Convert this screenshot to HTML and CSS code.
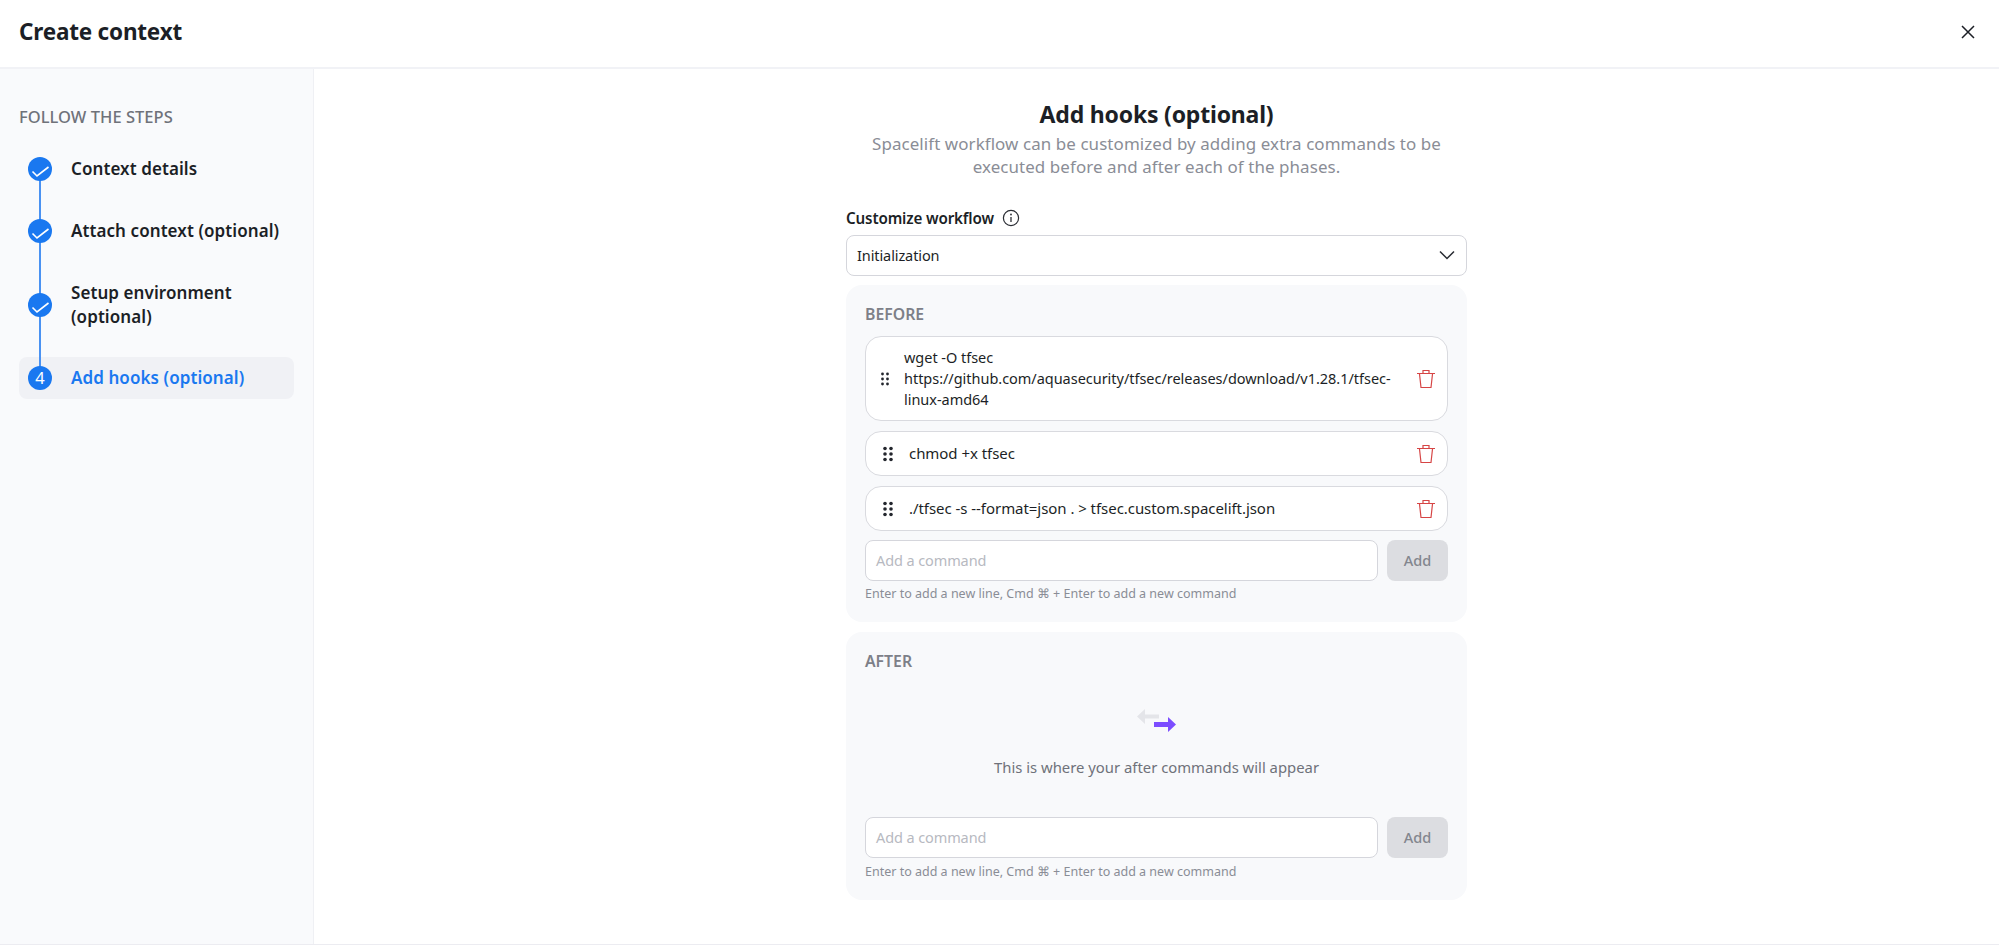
FILE: index.html
```html
<!DOCTYPE html>
<html lang="en">
<head>
<meta charset="utf-8">
<title>Create context</title>
<link rel="stylesheet" href="styles.css">
</head>
<body>
<div class="app">
  <header class="topbar">
    <h1 class="page-title">Create context</h1>
    <button class="close" aria-label="Close">
      <svg width="14" height="14" viewBox="0 0 14 14"><path d="M1 1l12 12M13 1L1 13" stroke="#1c1f26" stroke-width="1.5" fill="none"/></svg>
    </button>
  </header>
  <div class="body">
    <aside class="sidebar">
      <div class="steps-title">FOLLOW THE STEPS</div>
      <ol class="steps">
        <li class="step step-1">
          <span class="dot"><svg width="24" height="24" viewBox="0 0 24 24"><path d="M4.500 14.500l4.500 4.500 11.500-9" stroke="#fff" stroke-width="1.600" fill="none"/></svg></span>
          <span class="step-label">Context details</span>
        </li>
        <li class="step step-2">
          <span class="dot"><svg width="24" height="24" viewBox="0 0 24 24"><path d="M4.500 14.500l4.500 4.500 11.500-9" stroke="#fff" stroke-width="1.600" fill="none"/></svg></span>
          <span class="step-label">Attach context (optional)</span>
        </li>
        <li class="step step-3">
          <span class="dot"><svg width="24" height="24" viewBox="0 0 24 24"><path d="M4.500 14.500l4.500 4.500 11.500-9" stroke="#fff" stroke-width="1.600" fill="none"/></svg></span>
          <span class="step-label">Setup environment<br>(optional)</span>
        </li>
        <li class="step step-4 active">
          <span class="dot dot-num">4</span>
          <span class="step-label">Add hooks (optional)</span>
        </li>
      </ol>
    </aside>
    <main class="main">
      <div class="content">
        <h2 class="heading">Add hooks (optional)</h2>
        <p class="sub">Spacelift workflow can be customized by adding extra commands to be<br>executed before and after each of the phases.</p>
        <div class="field-label">Customize workflow
          <svg width="18" height="18" viewBox="0 0 18 18"><circle cx="9" cy="9" r="7.6" fill="none" stroke="#2a2d34" stroke-width="1.2"/><path d="M9 8v5" stroke="#2a2d34" stroke-width="1.3"/><circle cx="9" cy="5.5" r="0.9" fill="#2a2d34"/></svg>
        </div>
        <div class="select">
          <span>Initialization</span>
          <svg width="16" height="10" viewBox="0 0 16 10"><path d="M1 1.5l7 7 7-7" stroke="#2a2d34" stroke-width="1.5" fill="none"/></svg>
        </div>
        <section class="panel panel-before">
          <div class="panel-title">BEFORE</div>
          <div class="cmd cmd-tall">
            <svg class="grip-sm" width="8" height="14" viewBox="0 0 8 14"><g fill="#23262d"><circle cx="1.5" cy="2" r="1.4"/><circle cx="6.5" cy="2" r="1.4"/><circle cx="1.5" cy="7" r="1.4"/><circle cx="6.5" cy="7" r="1.4"/><circle cx="1.5" cy="12" r="1.4"/><circle cx="6.5" cy="12" r="1.4"/></g></svg>
            <div class="cmd-text">wget -O tfsec<br>https://github.com/aquasecurity/tfsec/releases/download/v1.28.1/tfsec-<br>linux-amd64</div>
            <svg class="trash" width="20" height="20" viewBox="0 0 20 20"><path d="M1 4.500h18M7 4.300V1.500h6v2.800M3.500 5l1.500 13.500h10L16.500 5" fill="none" stroke="#d64545" stroke-width="1.200"/></svg>
          </div>
          <div class="cmd">
            <svg class="grip" width="10" height="16" viewBox="0 0 10 16"><g fill="#23262d"><circle cx="2" cy="2.500" r="1.800"/><circle cx="8" cy="2.500" r="1.800"/><circle cx="2" cy="8" r="1.800"/><circle cx="8" cy="8" r="1.800"/><circle cx="2" cy="13.500" r="1.800"/><circle cx="8" cy="13.500" r="1.800"/></g></svg>
            <div class="cmd-text">chmod +x tfsec</div>
            <svg class="trash" width="20" height="20" viewBox="0 0 20 20"><path d="M1 4.500h18M7 4.300V1.500h6v2.800M3.500 5l1.500 13.500h10L16.500 5" fill="none" stroke="#d64545" stroke-width="1.200"/></svg>
          </div>
          <div class="cmd">
            <svg class="grip" width="10" height="16" viewBox="0 0 10 16"><g fill="#23262d"><circle cx="2" cy="2.500" r="1.800"/><circle cx="8" cy="2.500" r="1.800"/><circle cx="2" cy="8" r="1.800"/><circle cx="8" cy="8" r="1.800"/><circle cx="2" cy="13.500" r="1.800"/><circle cx="8" cy="13.500" r="1.800"/></g></svg>
            <div class="cmd-text">./tfsec -s --format=json . &gt; tfsec.custom.spacelift.json</div>
            <svg class="trash" width="20" height="20" viewBox="0 0 20 20"><path d="M1 4.500h18M7 4.300V1.500h6v2.800M3.500 5l1.500 13.500h10L16.500 5" fill="none" stroke="#d64545" stroke-width="1.200"/></svg>
          </div>
          <div class="add-row">
            <div class="input">Add a command</div>
            <div class="add-btn">Add</div>
          </div>
          <div class="hint">Enter to add a new line, Cmd ⌘ + Enter to add a new command</div>
        </section>
        <section class="panel panel-after">
          <div class="panel-title">AFTER</div>
          <div class="empty">
            <svg width="40" height="24" viewBox="0 0 40 24">
              <path d="M0 7.500L8 0v5.500h14v4H8V15z" fill="#e4e5e9"/>
              <path d="M39 15.500L31 8v5H17v5h14v5z" fill="#7c4dff"/>
            </svg>
            <div class="empty-text">This is where your after commands will appear</div>
          </div>
          <div class="add-row">
            <div class="input">Add a command</div>
            <div class="add-btn">Add</div>
          </div>
          <div class="hint">Enter to add a new line, Cmd ⌘ + Enter to add a new command</div>
        </section>
      </div>
    </main>
  </div>
</div>
</body>
</html>
```
FILE: styles.css
```css
* { box-sizing: border-box; }
html, body { margin: 0; padding: 0; height: 100%; }
body { font-family: "Noto Sans", "Open Sans", sans-serif; color: #1c1f26; background: #fff; overflow: hidden; }
.app { height: 945px; display: flex; flex-direction: column; border-bottom: 1px solid #ececf1; }
.topbar { height: 69px; flex: none; display: flex; align-items: center; justify-content: space-between; padding: 0 19px; border-bottom: 2px solid #f1f2f6; }
.page-title { margin: 0; font-size: 22.5px; font-weight: 700; letter-spacing: -0.2px; position: relative; top: -2px; }
.close { background: none; border: 0; padding: 0; display: flex; margin-right: 5px; position: relative; top: -2px; }
.body { flex: 1; display: flex; min-height: 0; }
.sidebar { width: 314px; flex: none; background: #f9fafc; border-right: 1px solid #eff0f4; padding: 38px 19px 0; }
.steps-title { font-size: 16.5px; line-height: 20px; font-weight: 500; color: #6f727a; letter-spacing: 0.03px; }
.steps { list-style: none; margin: 0; padding: 0; }
.step { position: relative; display: flex; align-items: center; padding-left: 52px; font-size: 17px; font-weight: 600; line-height: 24px; letter-spacing: 0.08px; }
.step-1 { margin-top: 30px; height: 24px; }
.step-2 { margin-top: 38px; height: 24px; }
.step-3 { margin-top: 38px; height: 48px; }
.step-4 { margin-top: 28px; height: 42px; }
.dot { position: absolute; left: 9px; top: 50%; margin-top: -12px; width: 24px; height: 24px; border-radius: 50%; background: #1a78f0; display: flex; align-items: center; justify-content: center; color: #fff; z-index: 2; letter-spacing: 0; }
.dot-num { font-size: 16.5px; font-weight: 400; }
.step:not(.step-4)::after { content: ""; position: absolute; width: 2px; background: #4a92f2; left: 20px; top: 50%; z-index: 1; }
.step-1::after { height: 62px; }
.step-2::after { height: 74px; }
.step-3::after { height: 73px; }
.active { background: #f0f1f5; border-radius: 8px; color: #1a78f0; }
.main { flex: 1; display: flex; justify-content: center; min-width: 0; }
.content { width: 621px; padding-top: 30px; }
.heading { margin: 0 0 3px; text-align: center; font-size: 23px; line-height: 30px; font-weight: 700; letter-spacing: -0.2px; }
.sub { margin: 0; text-align: center; font-size: 16.95px; line-height: 23px; color: #8a8d96; letter-spacing: 0.08px; }
.field-label { margin-top: 28px; height: 24px; display: flex; align-items: center; gap: 8px; font-size: 15.2px; font-weight: 600; letter-spacing: -0.15px; }
.select { margin-top: 5px; height: 41px; border: 1px solid #d5d6dc; border-radius: 8px; background: #fff; display: flex; align-items: center; justify-content: space-between; padding: 0 11px 2px 10px; font-size: 14.5px; letter-spacing: -0.1px; }
.panel { background: #f8f9fb; border-radius: 16px; padding: 19px 19px 0; margin-top: 9px; }
.panel-before { height: 337px; }
.panel-after { height: 268px; margin-top: 10px; }
.panel-title { font-size: 15.8px; line-height: 20px; font-weight: 600; color: #7d8088; }
.cmd { margin-top: 10px; height: 45px; display: flex; align-items: center; border: 1px solid #d9dadf; border-radius: 16px; background: #fff; padding: 0 11px 0 15px; font-size: 15px; line-height: 21px; letter-spacing: -0.05px; color: #1c1f26; }
.cmd-tall { height: 85px; margin-top: 12px; font-size: 14.5px; letter-spacing: -0.03px; }
.grip { flex: none; margin-left: 2px; margin-right: 16px; }
.grip-sm { flex: none; margin-right: 15px; }
.cmd-text { flex: 1; min-width: 0; white-space: nowrap; }
.trash { flex: none; margin-left: auto; }
.add-row { margin-top: 9px; display: flex; gap: 9px; }
.input { flex: 1; height: 41px; border: 1px solid #d5d6dc; border-radius: 8px; background: #fff; display: flex; align-items: center; padding: 0 10px 2px; font-size: 14.5px; letter-spacing: -0.1px; color: #b7b9c1; }
.add-btn { width: 61px; height: 41px; border-radius: 8px; background: #dcdde1; color: #83868e; display: flex; align-items: center; justify-content: center; padding-bottom: 1px; font-size: 14.5px; font-weight: 500; }
.hint { margin-top: 5px; font-size: 12.5px; line-height: 16px; color: #8a8d96; }
.panel-after .hint { margin-top: 6px; }
.empty { height: 137px; display: flex; flex-direction: column; align-items: center; padding-top: 38px; }
.empty-text { margin-top: 24px; font-size: 14.85px; line-height: 20px; color: #6f727a; }
```
